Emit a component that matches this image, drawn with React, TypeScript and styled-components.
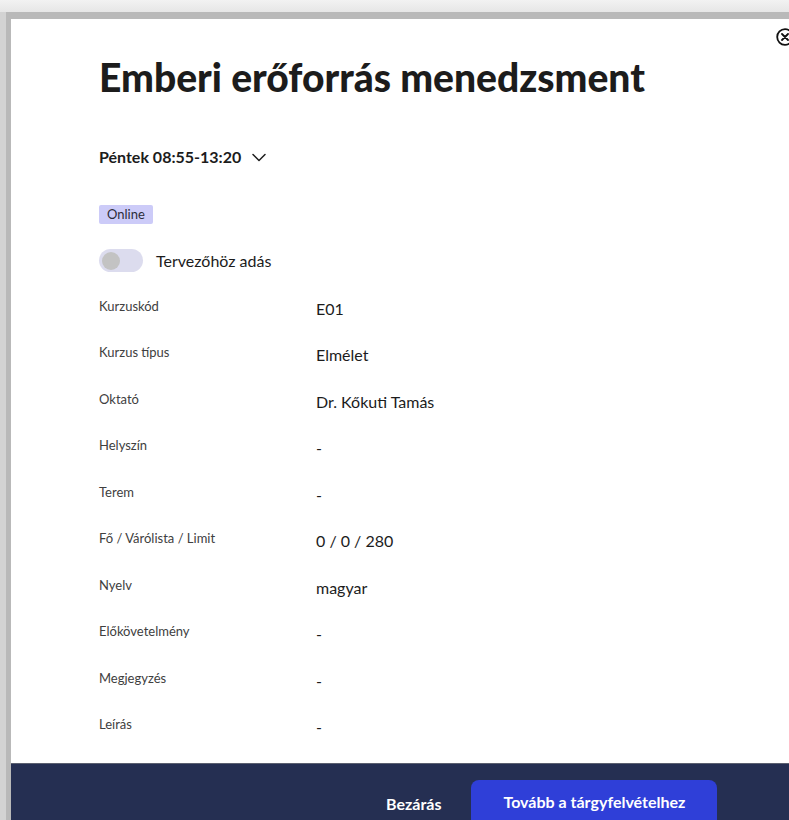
import React from "react";
import styled, { createGlobalStyle } from "styled-components";

const GlobalStyle = createGlobalStyle`
  html, body {
    margin: 0;
    padding: 0;
    width: 789px;
    height: 820px;
    overflow: hidden;
    font-family: Lato, "Open Sans", sans-serif;
  }
  * { box-sizing: border-box; }
`;

const Backdrop = styled.div`
  width: 789px;
  height: 820px;
  overflow: hidden;
  padding: 19px 0 0 11px;
  background:
    linear-gradient(to bottom, #f2f2f2 0, #e6e6e6 12px, transparent 12px),
    #d3d3d3;
`;

const Modal = styled.div`
  position: relative;
  width: 800px;
  background: #ffffff;
  box-shadow: -5px -7px 0 #b9b9b9;
  display: flex;
  flex-direction: column;
`;

const CloseButton = styled.button`
  position: absolute;
  top: 9px;
  right: 17px;
  width: 18px;
  height: 18px;
  padding: 0;
  border: none;
  background: none;
  color: #111;
  display: flex;
  align-items: center;
  justify-content: center;
`;

const Body = styled.div`
  padding: 34px 40px 0 88px;
  display: flex;
  flex-direction: column;
`;

const Title = styled.h1`
  margin: 0;
  font-family: "Lato Black", Lato, sans-serif;
  font-size: 39px;
  line-height: 48px;
  font-weight: 900;
  color: #1c1c1c;
`;

const Schedule = styled.button`
  margin-top: 46px;
  align-self: flex-start;
  display: flex;
  align-items: center;
  gap: 10px;
  padding: 0;
  border: none;
  background: none;
  font-family: inherit;
  font-size: 16px;
  line-height: 20px;
  font-weight: 700;
  color: #1c1c1c;
`;

const Badge = styled.span`
  margin-top: 38px;
  align-self: flex-start;
  padding: 2px 8px;
  border-radius: 2px;
  background: #cccbf8;
  color: #2d2d3a;
  font-size: 13px;
  line-height: 15px;
`;

const ToggleRow = styled.label`
  margin-top: 25px;
  display: flex;
  align-items: center;
  gap: 13px;
  font-size: 16px;
  line-height: 22px;
  color: #1c1c1c;
`;

const Track = styled.span`
  width: 44px;
  height: 23px;
  border-radius: 12px;
  background: #dcdcee;
  display: flex;
  align-items: center;
  padding: 0 3px;
`;

const Knob = styled.span`
  width: 18px;
  height: 18px;
  border-radius: 50%;
  background: #c3c3c3;
`;

const Details = styled.dl`
  margin: 25px 0 0;
  display: grid;
  grid-template-columns: 217px 1fr;
  grid-auto-rows: 46.45px;
  align-items: start;
`;

const Label = styled.dt`
  font-size: 13px;
  line-height: 18px;
  color: #404040;
`;

const Value = styled.dd`
  margin: 0;
  padding-top: 1px;
  font-size: 16px;
  line-height: 22px;
  color: #1c1c1c;
`;

const Footer = styled.div`
  margin-top: 2px;
  height: 80px;
  background: #252f52;
  border-top: 1px solid #5b6070;
  display: flex;
  align-items: flex-start;
  padding: 16px 0 0 375px;
  gap: 30px;
`;

const TextButton = styled.button`
  margin-top: 14px;
  padding: 0;
  border: none;
  background: none;
  color: #ffffff;
  font-family: inherit;
  font-size: 16px;
  font-weight: 700;
`;

const PrimaryButton = styled.button`
  width: 246px;
  height: 56px;
  padding: 0 0 14px;
  border: none;
  border-radius: 8px;
  background: #2f3fd8;
  color: #ffffff;
  font-family: inherit;
  font-size: 16px;
  font-weight: 700;
`;

const rows: [string, string][] = [
  ["Kurzuskód", "E01"],
  ["Kurzus típus", "Elmélet"],
  ["Oktató", "Dr. Kőkuti Tamás"],
  ["Helyszín", "-"],
  ["Terem", "-"],
  ["Fő / Várólista / Limit", "0 / 0 / 280"],
  ["Nyelv", "magyar"],
  ["Előkövetelmény", "-"],
  ["Megjegyzés", "-"],
  ["Leírás", "-"],
];

export default function App() {
  return (
    <>
      <GlobalStyle />
      <Backdrop>
        <Modal>
          <CloseButton aria-label="Bezárás">
            <svg width="18" height="18" viewBox="0 0 18 18" fill="none" stroke="currentColor" strokeWidth="1.8">
              <circle cx="9" cy="9" r="7.8" />
              <path d="M6 6l6 6M12 6l-6 6" strokeLinecap="round" />
            </svg>
          </CloseButton>
          <Body>
            <Title>Emberi erőforrás menedzsment</Title>
            <Schedule>
              Péntek 08:55-13:20
              <svg width="16" height="16" viewBox="0 0 16 16" fill="none" stroke="#1c1c1c" strokeWidth="1.5">
                <path d="M2 5.5l6 6 6-6" strokeLinecap="round" strokeLinejoin="round" />
              </svg>
            </Schedule>
            <Badge>Online</Badge>
            <ToggleRow>
              <Track>
                <Knob />
              </Track>
              Tervezőhöz adás
            </ToggleRow>
            <Details>
              {rows.map(([k, v]) => (
                <React.Fragment key={k}>
                  <Label>{k}</Label>
                  <Value>{v}</Value>
                </React.Fragment>
              ))}
            </Details>
          </Body>
          <Footer>
            <TextButton>Bezárás</TextButton>
            <PrimaryButton>Tovább a tárgyfelvételhez</PrimaryButton>
          </Footer>
        </Modal>
      </Backdrop>
    </>
  );
}
